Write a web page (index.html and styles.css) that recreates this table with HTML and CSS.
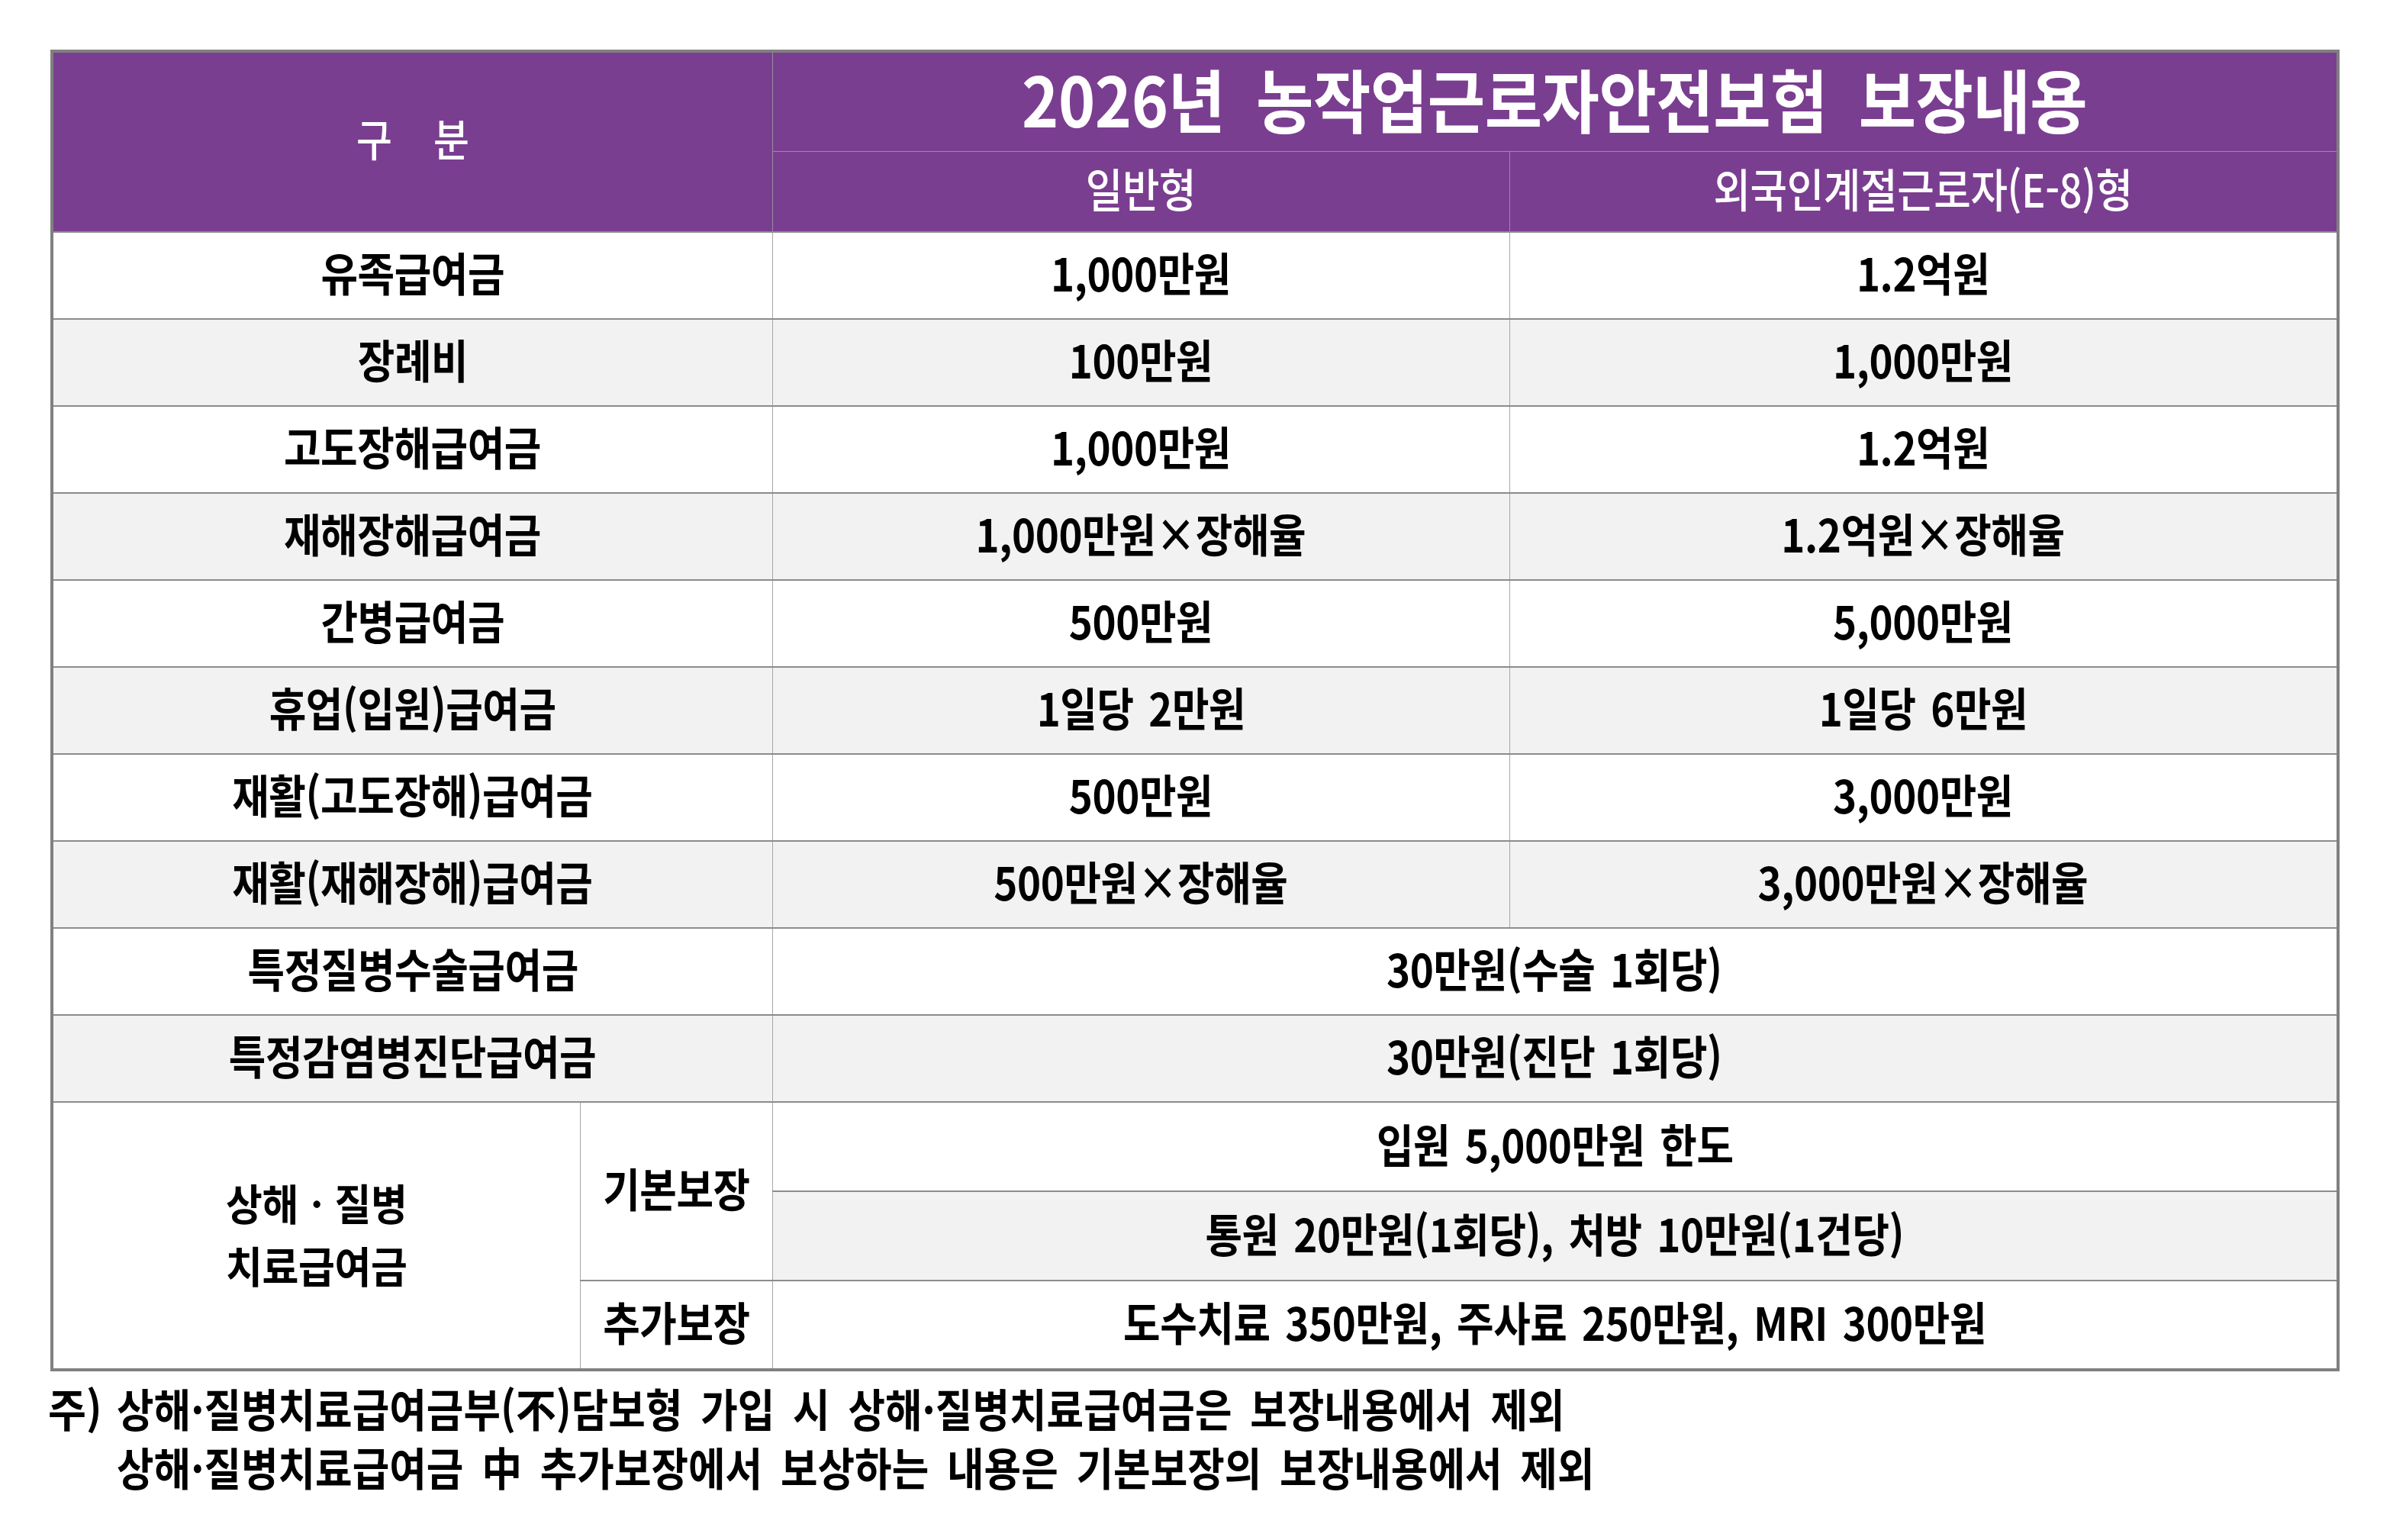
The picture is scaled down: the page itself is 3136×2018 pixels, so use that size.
FILE: index.html
```html
<!DOCTYPE html>
<html lang="ko">
<head>
<meta charset="utf-8">
<title>2026년 농작업근로자안전보험 보장내용</title>
<link rel="stylesheet" href="styles.css">
</head>
<body>
<div class="page">
  <table class="cov">
    <colgroup>
      <col class="c1a"><col class="c1b"><col class="c2"><col class="c3">
    </colgroup>
    <thead>
      <tr class="h1">
        <th colspan="2" rowspan="2" class="hcat"><span class="t">구 분</span></th>
        <th colspan="2" class="title"><span class="t">2026년 농작업근로자안전보험 보장내용</span></th>
      </tr>
      <tr class="h2">
        <th class="sub"><span class="t">일반형</span></th>
        <th class="sub"><span class="t">외국인계절근로자(E-8)형</span></th>
      </tr>
    </thead>
    <tbody>
      <tr class="r"><td colspan="2"><span class="t">유족급여금</span></td><td><span class="t">1,000만원</span></td><td><span class="t">1.2억원</span></td></tr>
      <tr class="r alt"><td colspan="2"><span class="t">장례비</span></td><td><span class="t">100만원</span></td><td><span class="t">1,000만원</span></td></tr>
      <tr class="r"><td colspan="2"><span class="t">고도장해급여금</span></td><td><span class="t">1,000만원</span></td><td><span class="t">1.2억원</span></td></tr>
      <tr class="r alt"><td colspan="2"><span class="t">재해장해급여금</span></td><td><span class="t">1,000만원×장해율</span></td><td><span class="t">1.2억원×장해율</span></td></tr>
      <tr class="r"><td colspan="2"><span class="t">간병급여금</span></td><td><span class="t">500만원</span></td><td><span class="t">5,000만원</span></td></tr>
      <tr class="r alt"><td colspan="2"><span class="t">휴업(입원)급여금</span></td><td><span class="t">1일당 2만원</span></td><td><span class="t">1일당 6만원</span></td></tr>
      <tr class="r"><td colspan="2"><span class="t">재활(고도장해)급여금</span></td><td><span class="t">500만원</span></td><td><span class="t">3,000만원</span></td></tr>
      <tr class="r alt"><td colspan="2"><span class="t">재활(재해장해)급여금</span></td><td><span class="t">500만원×장해율</span></td><td><span class="t">3,000만원×장해율</span></td></tr>
      <tr class="r"><td colspan="2"><span class="t">특정질병수술급여금</span></td><td colspan="2"><span class="t">30만원(수술 1회당)</span></td></tr>
      <tr class="r alt"><td colspan="2"><span class="t">특정감염병진단급여금</span></td><td colspan="2"><span class="t">30만원(진단 1회당)</span></td></tr>
      <tr class="b">
        <td rowspan="3" class="grp">
          <span class="t gl">상해ㆍ질병</span>
          <span class="t gl">치료급여금</span>
        </td>
        <td rowspan="2" class="kind"><span class="t">기본보장</span></td>
        <td colspan="2"><span class="t">입원 5,000만원 한도</span></td>
      </tr>
      <tr class="b alt">
        <td colspan="2"><span class="t">통원 20만원(1회당), 처방 10만원(1건당)</span></td>
      </tr>
      <tr class="b last">
        <td class="kind"><span class="t">추가보장</span></td>
        <td colspan="2"><span class="t">도수치료 350만원, 주사료 250만원, MRI 300만원</span></td>
      </tr>
    </tbody>
  </table>
  <div class="note">
    <span class="mark">주)</span>
    <div class="lines">
      <p>상해·질병치료급여금부(不)담보형 가입 시 상해·질병치료급여금은 보장내용에서 제외</p>
      <p>상해·질병치료급여금 中 추가보장에서 보상하는 내용은 기본보장의 보장내용에서 제외</p>
    </div>
  </div>
</div>
</body>
</html>
```

FILE: styles.css
```css
html, body {
  margin: 0;
  padding: 0;
  background: #ffffff;
}

body {
  font-family: "Noto Sans CJK KR", "Noto Sans", sans-serif;
  color: #000000;
}

.page {
  padding: 65px 0 0 66px;
}

.cov {
  border-collapse: collapse;
  table-layout: fixed;
  width: 2996px;
  border: 4px solid #808080;
}

.c1a { width: 692px; }
.c1b { width: 252px; }
.c2 { width: 966px; }
.c3 { width: 1086px; }

.cov th,
.cov td {
  padding: 0 0 10px 0;
  text-align: center;
  vertical-align: middle;
  border-left: 1px solid #a6a6a6;
  border-right: 1px solid #a6a6a6;
  border-top: 2px solid #8c8c8c;
  border-bottom: 2px solid #8c8c8c;
  white-space: nowrap;
  overflow: visible;
}

.cov thead th {
  background: #7a3e90;
  color: #ffffff;
  font-weight: 400;
  border-top: 1px solid #9a8aa3;
  border-bottom: 1px solid #9a8aa3;
  border-left: 1px solid #9a8aa3;
  border-right: 1px solid #9a8aa3;
}

.cov thead .h2 th {
  border-bottom: 2px solid #8c8c8c;
}

.h1 { height: 131px; }
.h2 { height: 106px; }
.r { height: 114px; }
.b { height: 117px; }

.t {
  display: inline-block;
  transform: scaleX(0.88);
  font-size: 60px;
  line-height: 1.3;
  letter-spacing: -0.5px;
}

.cov td .t {
  font-weight: 700;
  word-spacing: 6px;
}

.hcat .t {
  font-size: 58px;
  font-weight: 500;
  word-spacing: 46px;
}

.title .t {
  font-size: 90px;
  font-weight: 700;
  word-spacing: 20px;
  transform: scaleX(0.91);
}

.sub .t {
  font-size: 60px;
  font-weight: 500;
}

.alt td {
  background: #f2f2f2;
}

.cov .grp,
.cov .kind {
  background: #ffffff;
}

.cov .grp {
  padding-bottom: 6px;
}

.cov .grp .gl {
  display: block;
  font-size: 56px;
  line-height: 82px;
  letter-spacing: -0.5px;
  transform: scaleX(0.93);
}

.note {
  display: flex;
  margin-top: 9px;
  font-size: 59px;
  font-weight: 700;
  line-height: 77px;
}

.mark {
  width: 94px;
  flex: none;
  display: inline-block;
  transform: scaleX(0.92);
  transform-origin: left center;
  margin-left: -3px;
}

.lines p {
  margin: 0;
  white-space: nowrap;
  word-spacing: 10px;
  transform: scaleX(0.895);
  transform-origin: left center;
  margin-left: -4px;
}
```
